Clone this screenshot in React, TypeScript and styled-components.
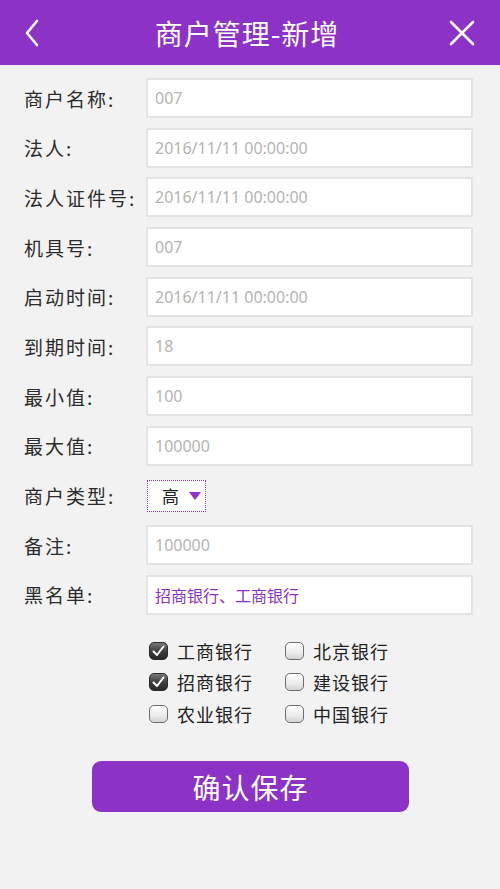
import React from 'react';
import styled, { createGlobalStyle } from 'styled-components';

const PURPLE = '#8d32c6';

const GlobalStyle = createGlobalStyle`
  html, body {
    margin: 0;
    padding: 0;
    background: #f2f2f2;
    font-family: "Noto Sans", "Noto Sans CJK SC", sans-serif;
  }
`;

const Page = styled.div`
  width: 500px;
  min-height: 889px;
  background: #f2f2f2;
`;

const Header = styled.header`
  height: 65px;
  background: ${PURPLE};
  display: flex;
  align-items: center;
  justify-content: space-between;
  padding: 0 24px 0 18px;
  box-sizing: border-box;
  color: #fff;
`;

const HeaderTitle = styled.h1`
  margin: 0;
  font-size: 28px;
  font-weight: 400;
  letter-spacing: 1px;
  color: #fff;
  font-family: "Noto Sans CJK SC", sans-serif;
`;

const IconButton = styled.div`
  width: 28px;
  height: 30px;
  display: flex;
  align-items: center;
  justify-content: center;
`;

const Form = styled.div`
  padding: 13px 27px 0 24px;
`;

const FieldRow = styled.div<{ $extra?: number }>`
  display: grid;
  grid-template-columns: 122px 327px;
  align-items: center;
  height: 40px;
  margin-top: ${p => p.$extra ?? 0}px;
  margin-bottom: 9.7px;
`;

const Label = styled.label`
  font-size: 19px;
  letter-spacing: 2px;
  color: #2b2b2b;
  font-family: "Noto Sans CJK SC", sans-serif;
`;

const Input = styled.div<{ $accent?: boolean }>`
  height: 40px;
  box-sizing: border-box;
  border: 2px solid #e3e3e3;
  background: #fff;
  display: flex;
  align-items: center;
  padding-left: 7px;
  font-size: 16px;
  color: ${p => (p.$accent ? PURPLE : '#b4b4b4')};
  font-family: ${p => (p.$accent ? '"Noto Sans CJK SC", sans-serif' : '"Noto Sans", sans-serif')};
`;

const Select = styled.div`
  width: 59px;
  height: 32px;
  box-sizing: border-box;
  margin-left: 1px;
  border: 1px dotted ${PURPLE};
  background: #fff;
  display: flex;
  align-items: center;
  gap: 10px;
  padding-left: 14px;
  font-size: 17px;
  color: #222;
  font-family: "Noto Sans CJK SC", sans-serif;
`;

const Caret = styled.span`
  width: 0;
  height: 0;
  border-left: 6px solid transparent;
  border-right: 6px solid transparent;
  border-top: 8px solid ${PURPLE};
`;

const BankGrid = styled.div`
  display: grid;
  grid-template-columns: 136px 136px;
  grid-auto-rows: 31.5px;
  padding-left: 149px;
  margin-top: 20px;
`;

const BankItem = styled.div`
  display: flex;
  align-items: center;
  gap: 9px;
  font-size: 18px;
  letter-spacing: 1px;
  color: #222;
  font-family: "Noto Sans CJK SC", sans-serif;
`;

const Box = styled.span<{ $checked: boolean }>`
  width: 19px;
  height: 18px;
  box-sizing: border-box;
  border-radius: 5px;
  display: flex;
  align-items: center;
  justify-content: center;
  border: 1px solid ${p => (p.$checked ? '#2a2a2a' : '#6e6e6e')};
  background: ${p =>
    p.$checked
      ? 'linear-gradient(#777 0%, #3a3a3a 55%, #2a2a2a 100%)'
      : 'linear-gradient(#fefefe 0%, #ececec 60%, #d4d4d4 100%)'};
`;

const SaveButton = styled.button`
  display: block;
  margin: 32px 0 0 92px;
  width: 317px;
  height: 51px;
  border: none;
  border-radius: 9px;
  background: ${PURPLE};
  color: #fff;
  font-size: 28px;
  letter-spacing: 1px;
  font-family: "Noto Sans CJK SC", sans-serif;
`;

const fields: { label: string; value: string }[] = [
  { label: '商户名称:', value: '007' },
  { label: '法人:', value: '2016/11/11 00:00:00' },
  { label: '法人证件号:', value: '2016/11/11 00:00:00' },
  { label: '机具号:', value: '007' },
  { label: '启动时间:', value: '2016/11/11 00:00:00' },
  { label: '到期时间:', value: '18' },
  { label: '最小值:', value: '100' },
  { label: '最大值:', value: '100000' },
];

const banks = [
  { name: '工商银行', checked: true },
  { name: '北京银行', checked: false },
  { name: '招商银行', checked: true },
  { name: '建设银行', checked: false },
  { name: '农业银行', checked: false },
  { name: '中国银行', checked: false },
];

const App: React.FC = () => {
  return (
    <Page>
      <GlobalStyle />
      <Header>
        <IconButton>
          <svg width="20" height="28" viewBox="0 0 20 28">
            <path d="M15 2 L5 14 L15 26" fill="none" stroke="#fff" strokeWidth="2.6" strokeLinecap="round" strokeLinejoin="round" />
          </svg>
        </IconButton>
        <HeaderTitle>商户管理-新增</HeaderTitle>
        <IconButton>
          <svg width="26" height="26" viewBox="0 0 26 26">
            <path d="M2 2 L24 24 M24 2 L2 24" fill="none" stroke="#fff" strokeWidth="2.6" strokeLinecap="round" />
          </svg>
        </IconButton>
      </Header>

      <Form>
        {fields.map(f => (
          <FieldRow key={f.label + f.value}>
            <Label>{f.label}</Label>
            <Input>{f.value}</Input>
          </FieldRow>
        ))}
        <FieldRow>
          <Label>商户类型:</Label>
          <Select>
            高<Caret />
          </Select>
        </FieldRow>
        <FieldRow>
          <Label>备注:</Label>
          <Input>100000</Input>
        </FieldRow>
        <FieldRow $extra={3}>
          <Label>黑名单:</Label>
          <Input $accent>招商银行、工商银行</Input>
        </FieldRow>
      </Form>

      <BankGrid>
        {banks.map(b => (
          <BankItem key={b.name}>
            <Box $checked={b.checked}>
              {b.checked && (
                <svg width="13" height="12" viewBox="0 0 13 12">
                  <path d="M1.5 6.5 L5 10 L11.5 1.5" fill="none" stroke="#fff" strokeWidth="2" strokeLinecap="round" strokeLinejoin="round" />
                </svg>
              )}
            </Box>
            {b.name}
          </BankItem>
        ))}
      </BankGrid>

      <SaveButton>确认保存</SaveButton>
    </Page>
  );
};

export default App;
